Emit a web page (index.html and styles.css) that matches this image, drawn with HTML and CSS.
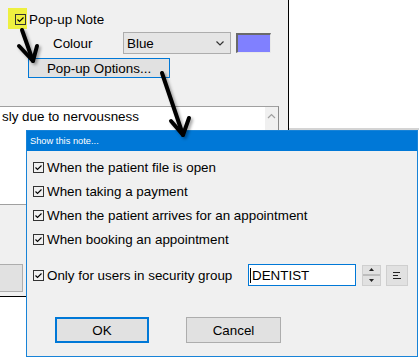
FILE: index.html
```html
<!DOCTYPE html>
<html>
<head>
<meta charset="utf-8">
<link rel="stylesheet" href="styles.css">
</head>
<body>
<div class="screen">
  <div class="panel">
    <div class="note-row">
      <span class="hl">
        <svg class="cb" width="11" height="11" viewBox="0 0 11 11"><rect x="0.5" y="0.5" width="10" height="10" fill="none" stroke="#333"/><path d="M2.5 5.5 L4.5 7.5 L8.5 3.5" fill="none" stroke="#000" stroke-width="1.1"/></svg>
      </span>
      <span class="note-label">Pop-up Note</span>
    </div>
    <div class="colour-row">
      <span class="colour-label">Colour</span>
      <div class="select">
        <span>Blue</span>
        <svg width="8" height="5" viewBox="0 0 8 5"><path d="M0.5 0.5 L4 4 L7.5 0.5" fill="none" stroke="#333" stroke-width="1.2"/></svg>
      </div>
      <div class="swatch"></div>
    </div>
    <div class="opt-btn">Pop-up Options...</div>
    <div class="memo">
      <div class="memo-text">sly due to nervousness</div>
      <div class="scroll">
        <svg width="9" height="6" viewBox="0 0 9 6"><path d="M1 5 L4.5 1.5 L8 5" fill="none" stroke="#a0a0a0" stroke-width="1.2"/></svg>
      </div>
    </div>
    <div class="stub-btn"></div>
  </div>
  <div class="right"></div>
</div>

<div class="dialog">
  <div class="title">Show this note...</div>
  <div class="dbody">
    <div class="check-row">
      <svg class="cb" width="11" height="11" viewBox="0 0 11 11"><rect x="0.5" y="0.5" width="10" height="10" fill="none" stroke="#333"/><path d="M2.5 5.5 L4.5 7.5 L8.5 3.5" fill="none" stroke="#000" stroke-width="1.1"/></svg>
      <span>When the patient file is open</span>
    </div>
    <div class="check-row">
      <svg class="cb" width="11" height="11" viewBox="0 0 11 11"><rect x="0.5" y="0.5" width="10" height="10" fill="none" stroke="#333"/><path d="M2.5 5.5 L4.5 7.5 L8.5 3.5" fill="none" stroke="#000" stroke-width="1.1"/></svg>
      <span>When taking a payment</span>
    </div>
    <div class="check-row">
      <svg class="cb" width="11" height="11" viewBox="0 0 11 11"><rect x="0.5" y="0.5" width="10" height="10" fill="none" stroke="#333"/><path d="M2.5 5.5 L4.5 7.5 L8.5 3.5" fill="none" stroke="#000" stroke-width="1.1"/></svg>
      <span>When the patient arrives for an appointment</span>
    </div>
    <div class="check-row">
      <svg class="cb" width="11" height="11" viewBox="0 0 11 11"><rect x="0.5" y="0.5" width="10" height="10" fill="none" stroke="#333"/><path d="M2.5 5.5 L4.5 7.5 L8.5 3.5" fill="none" stroke="#000" stroke-width="1.1"/></svg>
      <span>When booking an appointment</span>
    </div>
    <div class="group-row">
      <div class="check-row group-check">
        <svg class="cb" width="11" height="11" viewBox="0 0 11 11"><rect x="0.5" y="0.5" width="10" height="10" fill="none" stroke="#333"/><path d="M2.5 5.5 L4.5 7.5 L8.5 3.5" fill="none" stroke="#000" stroke-width="1.1"/></svg>
        <span>Only for users in security group</span>
      </div>
      <div class="textbox"><span class="caret"></span>DENTIST</div>
      <div class="spin">
        <div class="spin-half"><svg width="5" height="3" viewBox="0 0 5 3"><path d="M0 3 L2.5 0 L5 3 Z" fill="#222"/></svg></div>
        <div class="spin-half spin-bottom"><svg width="5" height="3" viewBox="0 0 5 3"><path d="M0 0 L2.5 3 L5 0 Z" fill="#222"/></svg></div>
      </div>
      <div class="align-btn">
        <svg width="9" height="7" viewBox="0 0 9 7"><path d="M0 0.5 H7 M0 3.5 H5 M0 6.5 H8" stroke="#222" stroke-width="1"/></svg>
      </div>
    </div>
    <div class="buttons">
      <div class="btn btn-ok">OK</div>
      <div class="btn btn-cancel">Cancel</div>
    </div>
  </div>
</div>

<svg class="arrows" width="419" height="358" viewBox="0 0 419 358">
  <defs>
    <filter id="sh" x="-50%" y="-50%" width="200%" height="200%">
      <feDropShadow dx="2" dy="2" stdDeviation="1.5" flood-color="#000" flood-opacity="0.35"/>
    </filter>
  </defs>
  <g fill="none" stroke="#000" stroke-width="4" stroke-linecap="round" stroke-linejoin="round" filter="url(#sh)">
    <path d="M22 30 L33 61"/>
    <path d="M19 46 L33 61 L37 46"/>
    <path d="M162 73 L183 135"/>
    <path d="M171 121 L183 135 L189 118"/>
  </g>
</svg>
</body>
</html>
```

FILE: styles.css
```css
html, body {
  margin: 0;
  padding: 0;
}

body {
  position: relative;
  width: 419px;
  height: 358px;
  overflow: hidden;
  background: #ffffff;
  font-family: "Liberation Sans", Arial, sans-serif;
  font-size: 13.4px;
  color: #000;
}

.screen {
  display: flex;
  align-items: flex-start;
}

.panel {
  width: 288px;
  height: 296px;
  background: #f0f0f0;
  border-right: 1px solid #000;
  border-bottom: 1px solid #000;
  display: flex;
  flex-direction: column;
  flex-shrink: 0;
}

.right {
  flex: 1;
  height: 128px;
  background: #fff;
  border-bottom: 2px solid #d4d4d4;
}

.cb {
  display: block;
  flex-shrink: 0;
}

.note-row {
  display: flex;
  align-items: center;
  margin: 8px 0 0 8px;
  height: 21px;
}

.hl {
  width: 19px;
  height: 21px;
  background: #eef040;
  display: flex;
  align-items: center;
  padding: 2px 0 0 7px;
  box-sizing: border-box;
}

.note-label {
  margin: 2px 0 0 2px;
}

.colour-row {
  display: flex;
  align-items: center;
  margin-top: 3px;
  height: 22px;
}

.colour-label {
  width: 70px;
  padding-left: 53px;
  flex-shrink: 0;
}

.select {
  width: 108px;
  height: 22px;
  box-sizing: border-box;
  border: 1px solid #adadad;
  background: #e5e5e5;
  display: flex;
  align-items: center;
  justify-content: space-between;
  padding: 0 6px 0 3px;
}

.swatch {
  width: 35px;
  height: 20px;
  margin-left: 5px;
  box-sizing: border-box;
  background: #8080ff;
  border-top: 2px solid #6a6a6a;
  border-left: 2px solid #6a6a6a;
  border-right: 1px solid #e8e8e8;
  border-bottom: 1px solid #e8e8e8;
}

.opt-btn {
  margin: 4px 0 0 28px;
  width: 142px;
  height: 20px;
  box-sizing: border-box;
  border: 1px solid #0078d7;
  background: #e1e1e1;
  display: flex;
  align-items: center;
  justify-content: center;
}

.memo {
  margin: 28px 0 0 -1px;
  width: 280px;
  height: 99px;
  box-sizing: border-box;
  border: 1px solid #a0a0a0;
  border-right-color: #8a8a8a;
  background: #fff;
  display: flex;
}

.memo-text {
  flex: 1;
  padding: 2px 0 0 2px;
  line-height: 16px;
}

.scroll {
  width: 13px;
  background: #f0f0f0;
  display: flex;
  justify-content: center;
  padding-top: 6px;
  box-sizing: border-box;
}

.scroll svg {
  display: block;
}

.stub-btn {
  margin: 59px 0 0 -10px;
  width: 33px;
  height: 28px;
  box-sizing: border-box;
  border: 1px solid #adadad;
  background: #e1e1e1;
}

.dialog {
  position: absolute;
  left: 26px;
  top: 130px;
  width: 392px;
  height: 227px;
  box-sizing: border-box;
  border: 1px solid #1883d7;
  background: #f0f0f0;
  display: flex;
  flex-direction: column;
}

.title {
  height: 20px;
  background: #0078d7;
  color: #fff;
  font-size: 9.3px;
  line-height: 20px;
  padding-left: 3px;
}

.dbody {
  padding: 4px 0 0 6px;
  display: flex;
  flex-direction: column;
}

.check-row {
  display: flex;
  align-items: center;
  gap: 3px;
  height: 24px;
}

.group-row {
  display: flex;
  align-items: center;
  margin-top: 12px;
  height: 24px;
}

.group-check {
  width: 215px;
  flex-shrink: 0;
}

.textbox {
  width: 108px;
  height: 22px;
  box-sizing: border-box;
  border: 1px solid #0078d7;
  background: #fff;
  display: flex;
  align-items: center;
  padding-left: 1px;
}

.caret {
  width: 1px;
  height: 15px;
  background: #000;
  margin-right: 1px;
}

.spin {
  margin-left: 6px;
  width: 19px;
  height: 21px;
  box-sizing: border-box;
  border: 1px solid #cfcfcf;
  background: #e1e1e1;
  display: flex;
  flex-direction: column;
}

.spin-half {
  flex: 1;
  display: flex;
  align-items: center;
  justify-content: center;
}

.spin-bottom {
  border-top: 2px solid #bdbdbd;
}

.spin svg, .align-btn svg {
  display: block;
}

.align-btn {
  margin-left: 5px;
  width: 22px;
  height: 21px;
  box-sizing: border-box;
  border: 1px solid #cfcfcf;
  background: #e1e1e1;
  display: flex;
  align-items: center;
  justify-content: center;
}

.buttons {
  display: flex;
  margin: 30px 0 0 22px;
}

.btn {
  height: 26px;
  box-sizing: border-box;
  background: #e1e1e1;
  display: flex;
  align-items: center;
  justify-content: center;
}

.btn-ok {
  width: 94px;
  border: 2px solid #0078d7;
}

.btn-cancel {
  width: 95px;
  margin-left: 37px;
  border: 1px solid #adadad;
}

.arrows {
  position: absolute;
  left: 0;
  top: 0;
  pointer-events: none;
}
```
